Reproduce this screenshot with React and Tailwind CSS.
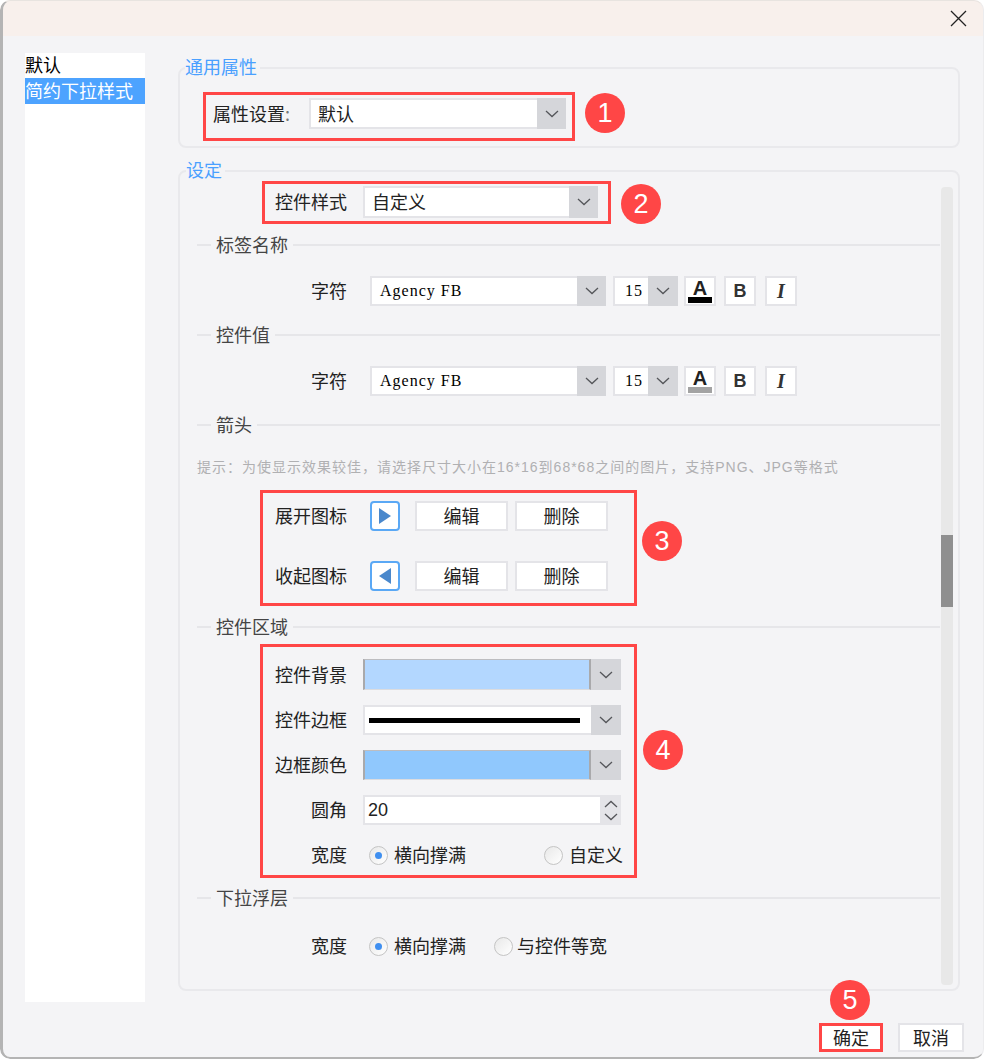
import React from "react";

const Chevron = ({ up }) => (
  <svg width="14" height="8" viewBox="0 0 14 8" fill="none" stroke="#55565a" strokeWidth="1.3">
    <path d={up ? "M1 7 L7 1.5 L13 7" : "M1 1 L7 6.5 L13 1"} />
  </svg>
);

const Arrow = ({ className }) => (
  <div className={`flex shrink-0 items-center justify-center bg-[#d5d6da] ${className}`}>
    <Chevron />
  </div>
);

const Badge = ({ n, className }) => (
  <div
    className={`absolute flex h-10 w-10 items-center justify-center rounded-full bg-[#ff4646] font-['Liberation_Sans',sans-serif] text-[27px] leading-none text-white ${className}`}
  >
    {n}
  </div>
);

const Select = ({ text, className }) => (
  <div className={`flex items-stretch border-2 border-[#e4e4e8] bg-white ${className}`}>
    <div className="flex flex-1 items-center pb-[2px] pl-[7px] text-[18px] leading-none text-[#222]">{text}</div>
    <Arrow className="-my-[2px] -mr-[2px] w-[29px]" />
  </div>
);

const Heading = ({ text, className = "" }) => (
  <div className={`flex h-6 items-center ${className}`}>
    <div className="h-[2px] w-[14px] bg-[#e6e6e9]" />
    <span className="px-[5px] pb-[2px] text-[18px] leading-none text-[#444]">{text}</span>
    <div className="h-[2px] flex-1 bg-[#e6e6e9]" />
  </div>
);

const ToolBtn = ({ children, className = "" }) => (
  <div className={`flex h-[30px] w-[32px] flex-col items-center justify-center border-2 border-[#e4e4e8] bg-white ${className}`}>
    {children}
  </div>
);

const FontRow = ({ bar, className = "" }) => (
  <div className={`ml-[114px] flex h-[30px] items-center ${className}`}>
    <span className="w-[36px] pb-[2px] text-[18px] leading-none text-[#222]">字符</span>
    <div className="ml-[23px] flex h-full w-[236px] items-stretch border-2 border-[#e4e4e8] bg-white">
      <div className="flex flex-1 items-center pl-2 font-['Liberation_Serif',serif] text-[16px] leading-none tracking-[1px] text-black">
        Agency FB
      </div>
      <Arrow className="-my-[2px] -mr-[2px] w-[29px]" />
    </div>
    <div className="ml-[7px] flex h-full w-[65px] items-stretch border-2 border-[#e4e4e8] bg-white">
      <div className="flex flex-1 items-center pl-[10px] font-['Liberation_Serif',serif] text-[16px] leading-none tracking-[1px] text-black">
        15
      </div>
      <Arrow className="-my-[2px] -mr-[2px] w-[30px]" />
    </div>
    <ToolBtn className="ml-[6px]">
      <span className="font-['Liberation_Sans',sans-serif] text-[20px] font-bold leading-[18px] text-[#222]">A</span>
      <div className={`h-[6px] w-[24px] ${bar}`} />
    </ToolBtn>
    <ToolBtn className="ml-2">
      <span className="font-['Liberation_Sans',sans-serif] text-[18px] font-bold leading-none text-[#333]">B</span>
    </ToolBtn>
    <ToolBtn className="ml-[9px]">
      <span className="font-['Liberation_Serif',serif] text-[20px] font-bold italic leading-none text-[#333]">I</span>
    </ToolBtn>
  </div>
);

const IconRow = ({ label, points, className = "" }) => (
  <div className={`flex h-[30px] items-center ${className}`}>
    <span className="w-[95px] pb-[2px] text-[18px] leading-none text-[#222]">{label}</span>
    <div className="flex h-full w-[30px] items-center justify-center rounded-[4px] border-2 border-[#5aa8f5] bg-white">
      <svg width="14" height="18" viewBox="0 0 14 18">
        <polygon points={points} fill="#4a88cc" />
      </svg>
    </div>
    <div className="ml-[15px] flex h-full w-[93px] items-center justify-center border-2 border-[#e4e4e8] bg-white pb-[2px] text-[18px] leading-none text-[#222]">
      编辑
    </div>
    <div className="ml-[7px] flex h-full w-[93px] items-center justify-center border-2 border-[#e4e4e8] bg-white pb-[2px] text-[18px] leading-none text-[#222]">
      删除
    </div>
  </div>
);

const FieldRow = ({ label, children, className = "" }) => (
  <div className={`flex h-[30px] items-center ${className}`}>
    <span className="w-[72px] pb-[2px] text-right text-[18px] leading-none text-[#222]">{label}</span>
    <div className="ml-4 flex h-full w-[258px] items-stretch">{children}</div>
  </div>
);

const Swatch = ({ color }) => (
  <div className="flex w-full items-stretch bg-[#e4e4e8]">
    <div className={`flex-1 border-x-2 border-t border-b border-[#a9a9ab] border-t-[#bdbdc0] border-b-[#dcdcdf] ${color}`} />
    <Arrow className="w-[30px]" />
  </div>
);

const Radio = ({ on, className = "" }) => (
  <div
    className={`flex h-[19px] w-[19px] shrink-0 items-center justify-center rounded-full border border-[#c4c4c4] bg-gradient-to-br from-[#e8e8e8] to-white ${className}`}
  >
    {on && <div className="h-[7px] w-[7px] rounded-full bg-[#3f8ff0]" />}
  </div>
);

const RadioLabel = ({ children, className = "" }) => (
  <span className={`pb-[2px] text-[18px] leading-none text-[#222] ${className}`}>{children}</span>
);

export default function App() {
  return (
    <div className="h-[1059px] w-[984px] bg-white font-['Noto_Sans_CJK_SC',sans-serif]">
      <div className="relative flex h-full flex-col overflow-hidden rounded-[10px] bg-[#f4f4f6]">
        <div className="flex h-9 shrink-0 items-center justify-end bg-[#f8f0ec] pr-[17px]">
          <svg width="17" height="17" viewBox="0 0 17 17" stroke="#222" strokeWidth="1.3">
            <path d="M1 1 L16 16 M16 1 L1 16" />
          </svg>
        </div>

        <div className="flex h-[987px] shrink-0 items-start">
          {/* left list */}
          <div className="ml-[25px] mt-[17px] h-[949px] w-[120px] shrink-0 bg-white text-[18px] leading-none">
            <div className="flex h-[25px] items-center pb-[3px] text-black">默认</div>
            <div className="flex h-[26px] items-center bg-[#4da3ff] pb-[2px] text-white">简约下拉样式</div>
          </div>

          <div className="ml-[33px] mt-[31px] w-[782px] shrink-0">
            {/* common props */}
            <div className="relative h-[81px] rounded-lg border-2 border-[#e9e9ec] pl-[23px] pt-[23px]">
              <span className="absolute -top-[13px] left-[5px] bg-[#f4f4f6] pr-[3px] text-[18px] leading-[20px] text-[#4aa0ff]">
                通用属性
              </span>
              <div className="relative flex h-[49px] w-[372px] items-start border-[3px] border-[#ff4646] pl-[7px] pt-[3px]">
                <span className="flex h-[31px] w-[96px] items-center pb-[2px] text-[18px] leading-none text-[#222]">
                  属性设置<span className="text-[#777]">:</span>
                </span>
                <Select text="默认" className="h-[31px] w-[257px]" />
                <Badge n="1" className="-right-[53px] -top-[2px]" />
              </div>
            </div>

            {/* settings */}
            <div className="relative mt-[22px] flex h-[821px] rounded-lg border-2 border-[#e9e9ec] pl-[17px] pr-[5px]">
              <span className="absolute -top-[13px] left-[6px] bg-[#f4f4f6] pr-[3px] text-[18px] leading-[20px] text-[#4aa0ff]">
                设定
              </span>
              <div className="mt-[9px] w-[743px] shrink-0">
                <div className="relative ml-[65px] flex h-[43px] w-[349px] items-start border-[3px] border-[#ff4646] pl-[10px] pt-[2px]">
                  <span className="flex h-[32px] w-[88px] items-center pb-[2px] text-[18px] leading-none text-[#222]">控件样式</span>
                  <Select text="自定义" className="h-[32px] w-[235px]" />
                  <Badge n="2" className="-right-[53px] top-0" />
                </div>

                <Heading text="标签名称" className="mt-[9px]" />
                <FontRow bar="bg-black" className="mt-[19px]" />
                <Heading text="控件值" className="mt-[17px]" />
                <FontRow bar="bg-[#a3a3a3]" className="mt-[19px]" />
                <Heading text="箭头" className="mt-[17px]" />

                <div className="mt-[21px] h-[18px] whitespace-nowrap font-['Liberation_Sans','Noto_Sans_CJK_SC',sans-serif] text-[14px] leading-[18px] tracking-[1px] text-[#b0b0b2]">
                  提示：为使显示效果较佳，请选择尺寸大小在16*16到68*68之间的图片，支持PNG、JPG等格式
                </div>

                <div className="relative ml-[63px] mt-[14px] h-[116px] w-[377px] border-[3px] border-[#ff4646] pl-[12px] pt-[8px]">
                  <IconRow label="展开图标" points="1,1 13,9 1,17" />
                  <IconRow label="收起图标" points="13,1 1,9 13,17" className="mt-[30px]" />
                  <Badge n="3" className="-right-[48px] top-[28px]" />
                </div>

                <Heading text="控件区域" className="mt-[9px]" />

                <div className="relative ml-[63px] mt-[5px] h-[234px] w-[377px] border-[3px] border-[#ff4646] pl-[12px] pt-[12px]">
                  <FieldRow label="控件背景" className="h-[31px]">
                    <Swatch color="bg-[#b3d7ff]" />
                  </FieldRow>
                  <FieldRow label="控件边框" className="mt-[15px]">
                    <div className="flex w-full items-stretch border-2 border-[#e4e4e8] bg-white">
                      <div className="flex flex-1 items-center pl-[4px] pr-[11px]">
                        <div className="h-[5px] w-full bg-black" />
                      </div>
                      <Arrow className="-my-[2px] -mr-[2px] w-[30px]" />
                    </div>
                  </FieldRow>
                  <FieldRow label="边框颜色" className="mt-[15px]">
                    <Swatch color="bg-[#90c8fd]" />
                  </FieldRow>
                  <FieldRow label="圆角" className="mt-[15px]">
                    <div className="flex w-full items-stretch border-2 border-[#e4e4e8] bg-white">
                      <div className="flex flex-1 items-center pl-[3px] font-['Liberation_Sans',sans-serif] text-[18px] leading-none text-[#222]">
                        20
                      </div>
                      <div className="-my-[2px] -mr-[2px] flex w-[21px] flex-col items-center justify-center gap-[5px] bg-[#e4e4e8]">
                        <Chevron up />
                        <Chevron />
                      </div>
                    </div>
                  </FieldRow>
                  <div className="mt-[15px] flex h-[30px] items-center">
                    <span className="w-[72px] pb-[2px] text-right text-[18px] leading-none text-[#222]">宽度</span>
                    <Radio on className="ml-[22px]" />
                    <RadioLabel className="ml-[6px]">横向撑满</RadioLabel>
                    <Radio className="ml-[78px]" />
                    <RadioLabel className="ml-[6px]">自定义</RadioLabel>
                  </div>
                  <Badge n="4" className="-right-[49px] top-[83px]" />
                </div>

                <Heading text="下拉浮层" className="mt-2" />
                <div className="ml-[114px] mt-[21px] flex h-[30px] items-center">
                  <span className="w-[36px] pb-[2px] text-[18px] leading-none text-[#222]">宽度</span>
                  <Radio on className="ml-[22px]" />
                  <RadioLabel className="ml-[6px]">横向撑满</RadioLabel>
                  <Radio className="ml-[28px]" />
                  <RadioLabel className="ml-[4px]">与控件等宽</RadioLabel>
                </div>
              </div>

              {/* scrollbar */}
              <div className="ml-[1px] mb-[4px] mt-[15px] w-[12px] shrink-0 rounded-[4px] bg-[#e8e8e8]">
                <div className="mt-[348px] h-[72px] w-full bg-[#8f8f8f]" />
              </div>
            </div>
          </div>
        </div>

        {/* footer */}
        <div className="flex items-start justify-end pr-[20px]">
          <div className="relative flex h-[29px] w-[64px] items-center justify-center border-[3px] border-[#ff4646] bg-white pb-[2px] text-[18px] leading-none text-[#222]">
            确定
            <Badge n="5" className="left-[8px] -top-[46px]" />
          </div>
          <div className="ml-[15px] flex h-[29px] w-[66px] items-center justify-center border-2 border-[#e4e4e8] bg-white pb-[2px] text-[18px] leading-none text-[#222]">
            取消
          </div>
        </div>

        <div className="pointer-events-none absolute inset-0 rounded-[10px] border-b-2 border-l-[3px] border-r border-t border-[#b4b4b4] border-r-[#ececee] border-t-[#e8e4e0]" />
      </div>
    </div>
  );
}
